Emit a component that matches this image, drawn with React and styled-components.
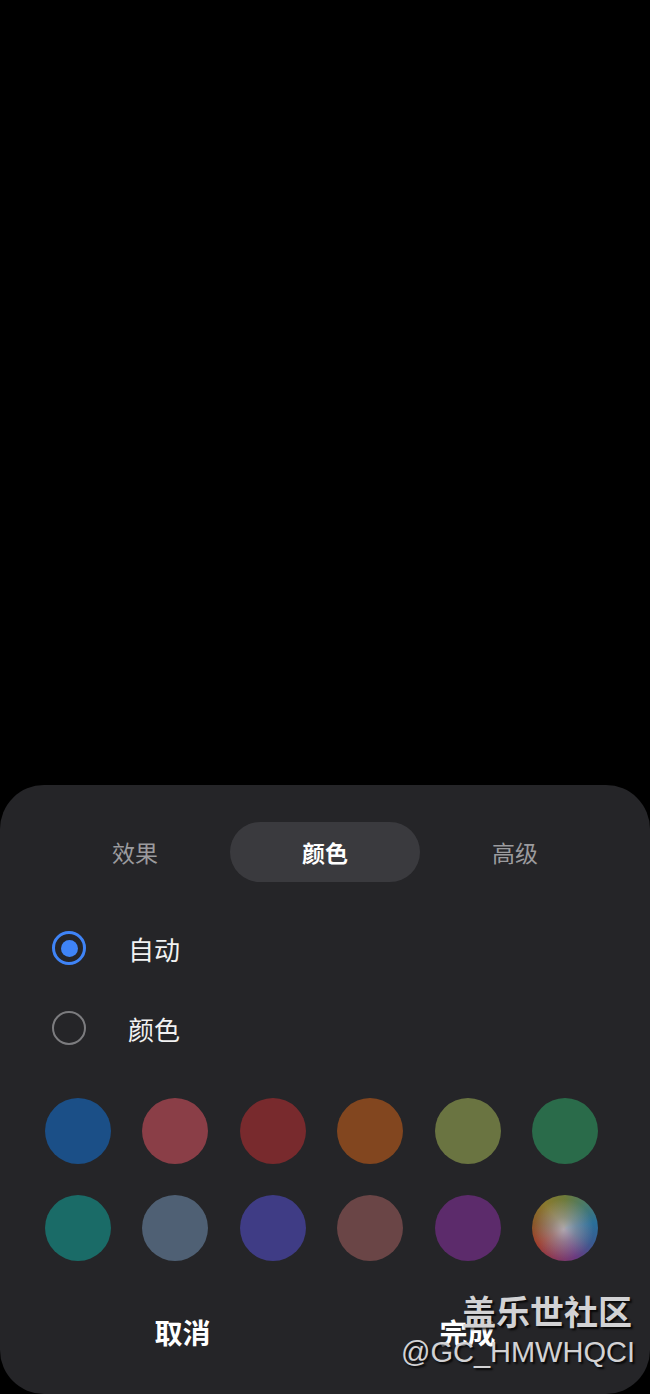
import React, { useState } from "react";
import styled, { createGlobalStyle } from "styled-components";

const GlobalStyle = createGlobalStyle`
  html, body {
    margin: 0;
    padding: 0;
    background: #000;
  }
  body {
    font-family: "Noto Sans CJK SC", "Noto Sans", sans-serif;
  }
`;

const tabs = ["效果", "颜色", "高级"];

const swatches = [
  "#1b4f87",
  "#8a3e47",
  "#782a2d",
  "#82461f",
  "#6a7441",
  "#2a6b4a",
  "#1a6b67",
  "#4f6074",
  "#3f3c85",
  "#6a4546",
  "#5c2b6b",
];

const Screen = styled.div`
  position: relative;
  height: 1394px;
  display: flex;
  flex-direction: column;
  justify-content: flex-end;
  overflow: hidden;
`;

const Sheet = styled.div`
  height: 609px;
  box-sizing: border-box;
  background: #252528;
  border-radius: 44px;
  padding-top: 37px;
  display: flex;
  flex-direction: column;
`;

const TabBar = styled.div`
  display: grid;
  grid-template-columns: repeat(3, 190px);
  padding: 0 40px;
`;

const Tab = styled.div`
  height: 60px;
  border-radius: 30px;
  display: flex;
  align-items: center;
  justify-content: center;
  font-size: 23px;
  font-weight: ${(p) => (p.active ? 700 : 400)};
  color: ${(p) => (p.active ? "#ffffff" : "#9b9b9e")};
  background: ${(p) => (p.active ? "#3a3a3e" : "transparent")};
`;

const Options = styled.div`
  margin-top: 26px;
  display: flex;
  flex-direction: column;
`;

const OptionRow = styled.div`
  height: 80px;
  display: flex;
  align-items: center;
  padding-left: 52px;
  gap: 42px;
`;

const Radio = styled.span`
  width: 34px;
  height: 34px;
  box-sizing: border-box;
  border-radius: 50%;
  border: ${(p) => (p.checked ? "3.5px solid #3f84f7" : "2.5px solid #7c7c7f")};
  display: flex;
  align-items: center;
  justify-content: center;

  &::after {
    content: "";
    width: 17px;
    height: 17px;
    border-radius: 50%;
    background: #3f84f7;
    display: ${(p) => (p.checked ? "block" : "none")};
  }
`;

const OptionLabel = styled.span`
  font-size: 26px;
  color: #f2f2f2;
`;

const SwatchGrid = styled.div`
  margin-top: 30px;
  display: grid;
  grid-template-columns: repeat(6, 66px);
  justify-content: space-between;
  row-gap: 31px;
  padding: 0 52px 0 45px;
`;

const Swatch = styled.div`
  width: 66px;
  height: 66px;
  border-radius: 50%;
  background: ${(p) => p.color};
`;

const Spectrum = styled(Swatch)`
  background:
    radial-gradient(circle at 48% 52%, rgba(175, 172, 180, 0.95) 0%, rgba(160, 158, 165, 0.6) 25%, rgba(0, 0, 0, 0) 62%),
    conic-gradient(from 0deg, #6d7a3a, #4a7a6a, #2a6f9a, #3a5a90, #6a3a80, #8a3a5a, #a0402f, #8a5a2a, #8a7a2f, #6d7a3a);
`;

const Actions = styled.div`
  margin-top: 40px;
  display: grid;
  grid-template-columns: 1fr 1fr;
  padding: 0 40px;
`;

const ActionButton = styled.button`
  height: 62px;
  background: none;
  border: none;
  font-family: inherit;
  font-size: 28px;
  font-weight: 700;
  color: #ffffff;
  padding: 0;
`;

const Watermark = styled.div`
  position: absolute;
  right: 15px;
  bottom: 24px;
  display: flex;
  flex-direction: column;
  align-items: flex-end;
  color: #d2d2d4;
  text-shadow: 2px 2px 2px rgba(0, 0, 0, 0.8);
  pointer-events: none;
`;

const WatermarkTitle = styled.div`
  font-size: 34px;
  font-weight: 700;
  line-height: 42px;
  margin-right: 3px;
  margin-bottom: 2px;
`;

const WatermarkHandle = styled.div`
  font-family: "Liberation Sans", Arial, sans-serif;
  font-size: 29px;
  line-height: 36px;
`;

export default function App() {
  const [tab] = useState(1);
  const [mode, setMode] = useState("auto");

  return (
    <Screen>
      <GlobalStyle />
      <Sheet>
        <TabBar>
          {tabs.map((t, i) => (
            <Tab key={t} active={i === tab}>
              {t}
            </Tab>
          ))}
        </TabBar>
        <Options>
          <OptionRow onClick={() => setMode("auto")}>
            <Radio checked={mode === "auto"} />
            <OptionLabel>自动</OptionLabel>
          </OptionRow>
          <OptionRow onClick={() => setMode("color")}>
            <Radio checked={mode === "color"} />
            <OptionLabel>颜色</OptionLabel>
          </OptionRow>
        </Options>
        <SwatchGrid>
          {swatches.map((c) => (
            <Swatch key={c} color={c} />
          ))}
          <Spectrum />
        </SwatchGrid>
        <Actions>
          <ActionButton>取消</ActionButton>
          <ActionButton>完成</ActionButton>
        </Actions>
      </Sheet>
      <Watermark>
        <WatermarkTitle>盖乐世社区</WatermarkTitle>
        <WatermarkHandle>@GC_HMWHQCI</WatermarkHandle>
      </Watermark>
    </Screen>
  );
}
